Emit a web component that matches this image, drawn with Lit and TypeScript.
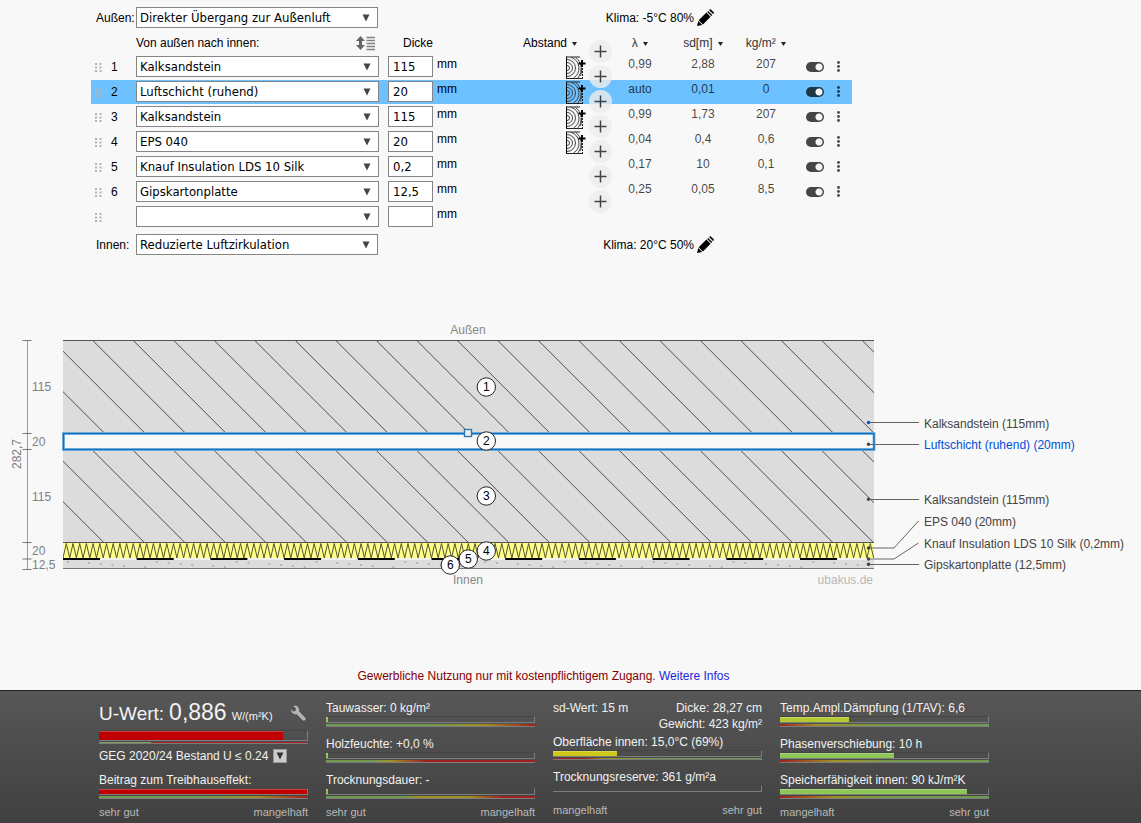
import { LitElement, html, svg, css, nothing } from "lit";
import { customElement, property } from "lit/decorators.js";

interface Layer {
  name: string;
  thickness: string;
  timber?: boolean;
  lambda?: string;
  sd?: string;
  mass?: string;
}

const LAYERS: Layer[] = [
  { name: "Kalksandstein", thickness: "115", timber: true, lambda: "0,99", sd: "2,88", mass: "207" },
  { name: "Luftschicht (ruhend)", thickness: "20", timber: true, lambda: "auto", sd: "0,01", mass: "0" },
  { name: "Kalksandstein", thickness: "115", timber: true, lambda: "0,99", sd: "1,73", mass: "207" },
  { name: "EPS 040", thickness: "20", timber: true, lambda: "0,04", sd: "0,4", mass: "0,6" },
  { name: "Knauf Insulation LDS 10 Silk", thickness: "0,2", lambda: "0,17", sd: "10", mass: "0,1" },
  { name: "Gipskartonplatte", thickness: "12,5", lambda: "0,25", sd: "0,05", mass: "8,5" },
  { name: "", thickness: "" },
];

const pencil = html`<svg width="18" height="18" viewBox="0 0 18 18" aria-hidden="true">
  <path d="M1 17l1.300-5 3.900 3.900z M2.700 11.300L10.400 3.600l4.200 4.200L6.900 15.500z M11.200 2.900l1-1 4.100 4.100-1 1z M13 1.100l.7-.7q.6-.5 1.200 0l2.800 2.800q.5.600 0 1.200l-.7.7z" fill="#000"/>
</svg>`;

@customElement("material-select")
class MaterialSelect extends LitElement {
  @property() value = "";
  @property() label = "";
  static styles = css`
    :host { display: block; position: relative; }
    .field {
      appearance: none; display: block; box-sizing: border-box; width: 100%; height: 21px;
      margin: 0; padding: 0 20px 0 3px; border: 1px solid #858585; border-radius: 0;
      background: #fff; color: #000; font: 13px "DejaVu Sans Condensed", "DejaVu Sans", sans-serif;
      font-stretch: condensed;
    }
    .arrow { position: absolute; right: 8px; top: 7px; pointer-events: none; }
  `;
  render() {
    return html`<select class="field" aria-label=${this.label}><option>${this.value}</option></select>
      <svg class="arrow" width="8" height="8" viewBox="0 0 8 8"><path d="M.5 .5h7L4 7.500z" fill="#444"/></svg>`;
  }
}

@customElement("rating-meter")
class RatingMeter extends LitElement {
  @property() label = "";
  @property({ type: Number }) value = 0;
  @property() color = "#8fc658";
  @property() scale = "";
  @property() kind = "normal";
  static styles = css`
    :host { display: block; }
    .label { height: 16px; line-height: 16px; white-space: nowrap; }
    .track { height: 5px; border: 1px solid #444; border-right-color: #7c7c7c; border-bottom-color: #7c7c7c; border-left: 0; }
    .tall .track { height: 9px; }
    .bar { height: 100%; box-shadow: inset 0 1px rgba(255, 255, 255, 0.25); }
    .scale { height: 2px; margin-top: 1px; border-bottom: 1px solid #7c7c7c; }
    .thin .scale, .tall .scale { height: 1px; }
  `;
  render() {
    return html`<div class=${this.kind}>
      ${this.label ? html`<div class="label">${this.label}</div>` : nothing}
      <div class="track"><div class="bar" style="width:${this.value}%;background:${this.color}"></div></div>
      ${this.scale ? html`<div class="scale" style="background:linear-gradient(90deg,${this.scale})"></div>` : nothing}
    </div>`;
  }
}

@customElement("wall-section")
class WallSection extends LitElement {
  static styles = css`
    :host { display: block; }
    .drawing { display: block; width: 100%; font: 12px "Liberation Sans", Arial, sans-serif; }
    .dim { fill: #808080; }
    .side { fill: #888; text-anchor: middle; }
    .brand { fill: #b8b8b8; text-anchor: end; }
    .name { fill: #444; }
    .name.active { fill: #0050d8; }
    .badge { text-anchor: middle; fill: #000; }
  `;

  private hatch(top: number) {
    const lines = Array.from({ length: 24 }, (_, i) => {
      const x = -29.2 + i * 40.5;
      return svg`<path d="M${x} ${top}l93 93"/>`;
    });
    return svg`<svg x="63" y=${top} width="811" height="93" viewBox="63 ${top} 811 93">
      <rect x="63" y=${top} width="811" height="93" fill="#dcdcdc"/>
      <g stroke="#505050">${lines}</g></svg>`;
  }

  render() {
    const zigzag = "M63 558" + Array.from({ length: 121 }, () => "l3.300 -14.500l3.400 14.500").join("");
    const dashes = Array.from({ length: 11 }, (_, i) => svg`<rect x=${63 + i * 73.7} y="558" width="37" height="2" fill="#000"/>`);
    const specks = Array.from({ length: 58 }, (_, i) => {
      const x = 67 + i * 13.8 + ((i * 7) % 9);
      const y = 561 + ((i * 11 + (i % 3) * 2) % 6);
      return svg`<rect x=${x} y=${y} width="2.200" height="2"/>`;
    });
    const names: [string, number, string][] = [
      ["Kalksandstein (115mm)", 428, "M868 422.500H919"],
      ["Luftschicht (ruhend) (20mm)", 449, "M868 444.500H919"],
      ["Kalksandstein (115mm)", 504, "M868 499.500H919"],
      ["EPS 040 (20mm)", 526, "M868 548H894L918.500 521"],
      ["Knauf Insulation LDS 10 Silk (0,2mm)", 548, "M868 559H894L918.500 543"],
      ["Gipskartonplatte (12,5mm)", 569, "M868 564.500H919"],
    ];
    const dots = [422.5, 444.3, 499.3, 548, 559, 564.3];
    const badges = [[486, 387], [486, 441], [486, 496], [486, 551], [468, 559], [450, 565]];
    const dims: [string, number][] = [["115", 391], ["20", 446], ["115", 501], ["20", 555], ["12,5", 569]];
    return html`<svg class="drawing" viewBox="0 320 1141 270" role="img" aria-label="Bauteilquerschnitt">
      <g stroke="#999" fill="none">
        <path d="M27.500 340V569.500"/>
        <path d="M22.500 340.500h9M22.500 433.500h9M22.500 449.500h9M22.500 542.500h9M22.500 559h9M22.500 569.500h9" stroke="#777"/>
      </g>
      ${dims.map(([t, y]) => svg`<text class="dim" x="32" y=${y}>${t}</text>`)}
      <text class="dim" text-anchor="middle" transform="translate(21 454) rotate(-90)">282,7</text>
      <text class="side" x="468" y="334">Außen</text>
      ${this.hatch(340)}
      ${this.hatch(450)}
      <path d="M63 340.500H874" stroke="#555"/>
      <rect x="63" y="543" width="811" height="16" fill="#ffff8c"/>
      <svg x="63" y="543" width="811" height="16" viewBox="63 543 811 16"><path d=${zigzag} fill="none" stroke="#55552e"/></svg>
      <rect x="63" y="558" width="811" height="2" fill="#f0f0f0"/>
      <rect x="63" y="560" width="811" height="9" fill="#dcdcdc"/>
      <path d="M63 542.500H874" stroke="#555"/>
      <path d="M63 568.500H874" stroke="#777"/>
      ${dashes}
      <g fill="#b8b8b8">${specks}</g>
      <rect x="63.500" y="433.500" width="810.500" height="16" fill="#f8f8f8" stroke="#8fbfe4" stroke-width="3"/>
      <rect x="63.500" y="433.500" width="810.500" height="16" fill="none" stroke="#0f6fbe" stroke-width="1.500"/>
      <rect x="464.500" y="429.500" width="7" height="7" fill="#eee" stroke="#2d7bab" stroke-width="1.400"/>
      ${badges.map(([x, y], i) => svg`<circle cx=${x + 0.3} cy=${y} r="9.200" fill="#fff" stroke="#222"/>
        <text class="badge" x=${x + 0.3} y=${y + 4}>${i + 1}</text>`)}
      <text class="side" x="468" y="584">Innen</text>
      <text class="brand" x="873" y="584">ubakus.de</text>
      ${names.map(([t, y, d], i) => svg`<path d=${d} fill="none" stroke="#666"/>
        <circle cx="868.500" cy=${dots[i]} r="1.700" fill=${i === 0 ? "#0050d8" : "#444"}/>
        <text class=${i === 1 ? "name active" : "name"} x="924" y=${y}>${t}</text>`)}
    </svg>`;
  }
}

@customElement("app-root")
class AppRoot extends LitElement {
  static styles = css`
    :host {
      display: flex; flex-direction: column; min-height: 100vh; background: #f8f8f8; color: #000;
      font: 12px/16px "Liberation Sans", Arial, sans-serif;
    }
    .editor { padding: 7px 0 0 91px; }
    .climate { display: grid; grid-template-columns: 45px 242px 336px; align-items: center; height: 21px; }
    .caption { padding-left: 5px; }
    .weather { display: flex; justify-content: flex-end; align-items: center; gap: 2px; }
    .plain { padding: 0; border: 0; background: none; color: inherit; font: inherit; display: block; }
    .plain svg { display: block; }
    .inner { margin-top: 4px; }
    .layers { width: 100%; max-width: 761px; table-layout: fixed; border-collapse: collapse; }
    .layers th { height: 25px; padding: 2px 0 0; font-weight: normal; text-align: left; white-space: nowrap; }
    .layers td { height: 25px; padding: 0; vertical-align: top; }
    .layers .active td { background: linear-gradient(#6ec1ff 24px, transparent 24px); }
    .c-grip { width: 18px; } .c-no { width: 27px; } .c-mat { width: 252px; } .c-thick { width: 135px; }
    .c-gap { width: 86px; } .c-val { width: 62px; } .c-sd { width: 64px; } .c-on { width: 32px; } .c-menu { width: 23px; }
    .head-mat { display: flex; justify-content: space-between; align-items: center; padding-right: 13px; }
    .layers .head-thick { padding-left: 15px; }
    .layers .head-val { text-align: center; color: #333; }
    .tri { margin-left: 2px; vertical-align: 1px; }
    .grip { display: block; margin: 8px 0 0 4px; }
    .no { padding: 4px 0 0 2px; }
    .mat { padding: 1px 9px 0 0; }
    .thick { display: flex; gap: 4px; padding-top: 1px; }
    .size {
      box-sizing: border-box; width: 45px; height: 21px; margin: 0; padding: 0 4px; border: 1px solid #858585; border-radius: 0;
      background: #fff; font: 13px "DejaVu Sans Condensed", "DejaVu Sans", sans-serif; font-stretch: condensed;
    }
    .unit { line-height: 16px; }
    .gap { position: relative; height: 24px; }
    .timber { padding: 1px 0 0 43px; }
    .add {
      position: absolute; left: 66px; top: -15px; z-index: 1; width: 23px; height: 23px; padding: 0; border: 0; border-radius: 50%;
      background: rgba(236, 236, 236, 0.8); display: grid; place-items: center;
    }
    .val { text-align: center; color: rgba(0, 0, 0, 0.74); padding-top: 1px; }
    .switch {
      appearance: none; display: block; width: 18px; height: 10px; margin: 7px 0 0 9px; border-radius: 5px;
      background: radial-gradient(circle at 13px 5px, #f4f8fb 3px, rgba(0, 0, 0, 0.72) 4px);
    }
    .more { padding: 6px 8px 0; }
    .section { margin-top: 65px; }
    .notice { margin: auto 0 0; padding: 0 54px 6px 0; text-align: center; color: #850000; }
    .notice a { color: #1a25d8; text-decoration: none; }
    .results {
      display: grid; grid-template-columns: repeat(4, minmax(0, 209px)); gap: 18px; box-sizing: border-box; min-height: 133px;
      padding: 9px 20px 3px 99px; border-top: 1px solid #222; background: linear-gradient(#575757, #404040); color: #f2f2f2;
    }
    .stack { display: flex; flex-direction: column; gap: 9px; }
    .ends { display: flex; justify-content: space-between; margin-top: -4px; font-size: 11px; color: #b9b9b9; }
    .uvalue { display: flex; align-items: baseline; height: 30px; line-height: 24px; font-size: 19px; white-space: nowrap; }
    .big { font-size: 23px; margin: 0 5px; }
    .small { font-size: 11px; }
    .wrench { margin-left: auto; align-self: flex-start; padding-top: 5px; }
    .norm { display: flex; align-items: center; gap: 5px; height: 16px; margin: 4px 0 8px; white-space: nowrap; }
    .drop { width: 14px; height: 14px; padding: 0; border: 1px solid #999; background: #ccc; display: grid; place-items: center; }
    .lead .ends { margin-top: 5px; }
    .facts { display: flex; justify-content: space-between; height: 34px; margin-bottom: -9px; }
    .facts ~ .ends { margin-top: 1px; }
    .right { text-align: right; }
  `;

  private sortHead(text: string) {
    return html`${text} <svg class="tri" width="5" height="4" viewBox="0 0 5 4"><path d="M0 0h5L2.500 4z" fill="#222"/></svg>`;
  }

  private row(l: Layer, i: number) {
    const filled = l.name !== "";
    return html`<tr class=${i === 1 ? "active" : ""}>
      <td><svg class="grip" width="7" height="9" viewBox="0 0 7 9"><path d="M0 0h2v2H0zM0 3.500h2v2H0zM0 7h2v2H0zM4.500 0h2v2h-2zM4.500 3.500h2v2h-2zM4.500 7h2v2h-2z" fill="#b4b4b4"/></svg></td>
      <td><div class="no">${filled ? i + 1 : ""}</div></td>
      <td><div class="mat"><material-select .value=${l.name} .label=${"Material Schicht " + (i + 1)}></material-select></div></td>
      <td><label class="thick"><input class="size" type="text" .value=${l.thickness} /><span class="unit">mm</span></label></td>
      <td><div class="gap">
        ${l.timber
          ? html`<button class="plain timber" aria-label="Balkenlage"><svg width="20" height="23" viewBox="0 0 20 23">
              <path d="M.5 .5V22.500" stroke="#000"/><path d="M0 1h14M0 22.500h17" stroke="#222"/><path d="M16.500 12V22.500" stroke="#222" stroke-dasharray="2 1"/>
              <g fill="none" stroke="#333" stroke-width=".9"><path d="M1 9.500a2.500 2.500 0 0 1 0 5M1 6.500a5.500 5.500 0 0 1 0 11M1 3.500a8.500 8.500 0 0 1 0 17M5 1.300a11.500 11.500 0 0 1 2.500 20.700M9.500 1.300a14.500 14.500 0 0 1 2.500 20.700M15.500 12a16 16 0 0 1-1 8"/></g>
              <path d="M12.500 7.500h7M16 4v7" stroke="#000" stroke-width="2"/></svg></button>`
          : nothing}
        <button class="add" aria-label="Schicht einfügen"><svg width="13" height="13" viewBox="0 0 13 13"><path d="M6.500 .500v12M.5 6.500h12" stroke="#000" stroke-opacity=".72" stroke-width="1.500"/></svg></button>
      </div></td>
      <td><div class="val">${l.lambda ?? ""}</div></td>
      <td><div class="val">${l.sd ?? ""}</div></td>
      <td><div class="val">${l.mass ?? ""}</div></td>
      <td>${filled ? html`<input class="switch" type="checkbox" checked aria-label="Schicht aktiv" />` : nothing}</td>
      <td>${filled
        ? html`<button class="plain more" aria-label="Menü"><svg width="3" height="11" viewBox="0 0 3 11"><g fill="#000" fill-opacity=".72"><circle cx="1.500" cy="1.500" r="1.400"/><circle cx="1.500" cy="5.500" r="1.400"/><circle cx="1.500" cy="9.500" r="1.400"/></g></svg></button>`
        : nothing}</td>
    </tr>`;
  }

  private climate(caption: string, value: string, weather: string) {
    return html`<span class="caption">${caption}</span>
      <material-select .value=${value} .label=${caption}></material-select>
      <span class="weather">${weather}<button class="plain" aria-label="Klima bearbeiten">${pencil}</button></span>`;
  }

  render() {
    return html`
      <div class="editor">
        <div class="climate">${this.climate("Außen:", "Direkter Übergang zur Außenluft", "Klima: -5°C 80%")}</div>
        <table class="layers">
          <colgroup>
            <col class="c-grip" /><col class="c-no" /><col class="c-mat" /><col class="c-thick" /><col class="c-gap" />
            <col class="c-val" /><col class="c-sd" /><col class="c-val" /><col class="c-on" /><col class="c-menu" />
          </colgroup>
          <thead><tr>
            <th></th><th></th>
            <th><div class="head-mat">Von außen nach innen:
              <button class="plain" aria-label="Reihenfolge umkehren"><svg width="19" height="16" viewBox="0 0 19 16">
                <path d="M4.500 1L9 6H6v4h3l-4.500 5L0 10h3V6H0z" fill="#666"/>
                <path d="M10.500 2.500H19M10.500 5.500H19M10.500 8.500H19M10.500 11.500H19M10.500 14.500H19" stroke="#808080" stroke-width="1.600"/></svg></button></div></th>
            <th class="head-thick">Dicke</th>
            <th>${this.sortHead("Abstand ")}</th>
            <th class="head-val">${this.sortHead("λ")}</th>
            <th class="head-val">${this.sortHead("sd[m]")}</th>
            <th class="head-val">${this.sortHead("kg/m²")}</th>
            <th></th><th></th>
          </tr></thead>
          <tbody>${LAYERS.map((l, i) => this.row(l, i))}</tbody>
        </table>
        <div class="climate inner">${this.climate("Innen:", "Reduzierte Luftzirkulation", "Klima: 20°C 50%")}</div>
      </div>
      <wall-section class="section"></wall-section>
      <p class="notice">Gewerbliche Nutzung nur mit kostenpflichtigem Zugang. <a href="#">Weitere Infos</a></p>
      <footer class="results">
        <div class="lead">
          <div class="uvalue">U-Wert: <span class="big">0,886</span><span class="small">W/(m²K)</span>
            <button class="plain wrench" aria-label="Einstellungen"><svg width="18" height="16" viewBox="0 0 18 16">
              <path d="M5 .5a4.500 4.500 0 0 1 4 5.800l6 6.200a1.800 1.800 0 0 1-2.500 2.600L6.500 9A4.500 4.500 0 0 1 .8 4.200L3.200 6.500l2.300-.6.500-2.300L3.600 1.200A4 4 0 0 1 5 .5z" fill="#b5b5b5"/></svg></button></div>
          <rating-meter kind="tall" .value=${88.5} color="#c00000" scale="#7ba05b 25%, #a82020 25%"></rating-meter>
          <div class="norm">GEG 2020/24 Bestand U ≤ 0.24
            <button class="drop" aria-label="Anforderung wählen"><svg width="8" height="8" viewBox="0 0 8 8"><path d="M.5 .5h7L4 7.500z" fill="#333"/></svg></button></div>
          <rating-meter label="Beitrag zum Treibhauseffekt:" .value=${100} color="#c00000" scale="#6f9a4f, #6f9a4f 50%, #a09020 75%, #a02020"></rating-meter>
          <div class="ends"><span>sehr gut</span><span>mangelhaft</span></div>
        </div>
        <div class="stack">
          <rating-meter label="Tauwasser: 0 kg/m²" .value=${1} scale="#6f9a4f 50%, #a09020 75%, #a02020"></rating-meter>
          <rating-meter label="Holzfeuchte: +0,0 %" .value=${1} scale="#6f9a4f 23%, #a09020 31%, #a02020 48%"></rating-meter>
          <rating-meter label="Trocknungsdauer: -" .value=${1} scale="#6f9a4f 37%, #a09020 45%, #a09020 68%, #a02020 85%"></rating-meter>
          <div class="ends"><span>sehr gut</span><span>mangelhaft</span></div>
        </div>
        <div class="stack">
          <div class="facts"><span>sd-Wert: 15 m</span><span class="right">Dicke: 28,27 cm<br />Gewicht: 423 kg/m²</span></div>
          <rating-meter kind="thin" label="Oberfläche innen: 15,0°C (69%)" .value=${31} color="#cfc818" scale="#a02020 15%, #a09020 24%, #6f9a4f 50%"></rating-meter>
          <rating-meter label="Trocknungsreserve: 361 g/m²a" .value=${0}></rating-meter>
          <div class="ends"><span>mangelhaft</span><span>sehr gut</span></div>
        </div>
        <div class="stack">
          <rating-meter label="Temp.Ampl.Dämpfung (1/TAV): 6,6" .value=${33} color="#b4c832" scale="#a02020, #a09020 18%, #6f9a4f 55%"></rating-meter>
          <rating-meter label="Phasenverschiebung: 10 h" .value=${55} scale="#a02020, #a09020 26%, #6f9a4f 55%"></rating-meter>
          <rating-meter label="Speicherfähigkeit innen: 90 kJ/m²K" .value=${90} scale="#a02020, #a09020 26%, #6f9a4f 55%"></rating-meter>
          <div class="ends"><span>mangelhaft</span><span>sehr gut</span></div>
        </div>
      </footer>`;
  }
}
